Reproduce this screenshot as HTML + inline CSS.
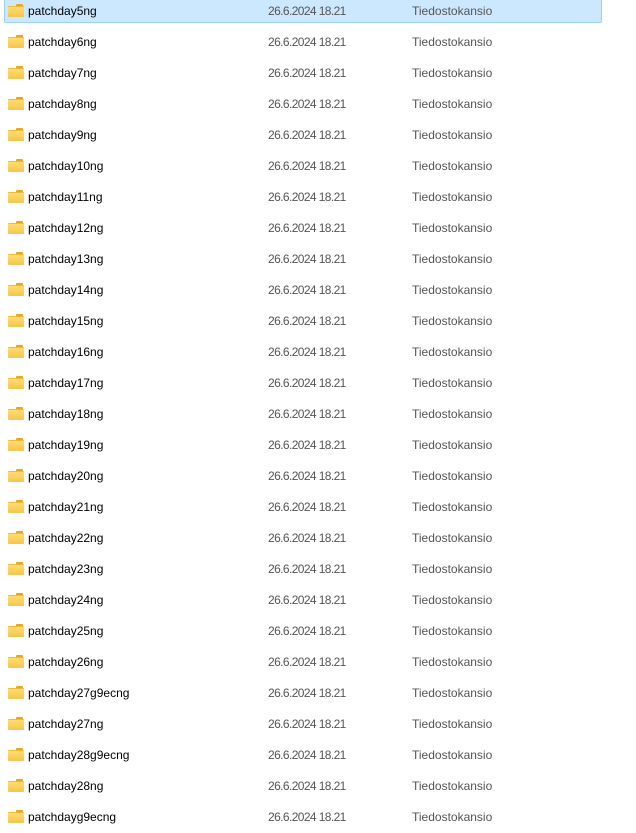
<!DOCTYPE html>
<html><head><meta charset="utf-8"><style>
body{margin:0;width:636px;height:833px;background:#fff;position:relative;overflow:hidden;font-family:"Liberation Sans",sans-serif;font-size:12px}
.r{position:absolute;left:0;width:636px;height:20px;line-height:20px}
.sel{position:absolute;left:4px;top:-5px;width:598px;height:28px;background:#cce8ff;border:1px solid #99d1ff;border-radius:2px;box-sizing:border-box}
.f{position:absolute;left:8px;top:3px;width:16px;height:13px}
.t{position:absolute;left:8px;top:0;width:7px;height:4px;background:#e6a82a;border-radius:1px 1px 0 0}
.b{position:absolute;left:0;top:2px;width:16px;height:11px;background:linear-gradient(#ffdc73,#f7c548);border-top:1px solid #f0b93a;box-sizing:border-box;border-radius:1px}
.n{position:absolute;left:28px;color:#000}
.d{position:absolute;left:268px;color:#555;letter-spacing:-0.6px}
.k{position:absolute;left:412px;color:#555}
</style></head><body>
<div class="sel"></div>
<div id="c"></div>
<script>
var names=["patchday5ng","patchday6ng","patchday7ng","patchday8ng","patchday9ng","patchday10ng","patchday11ng","patchday12ng","patchday13ng","patchday14ng","patchday15ng","patchday16ng","patchday17ng","patchday18ng","patchday19ng","patchday20ng","patchday21ng","patchday22ng","patchday23ng","patchday24ng","patchday25ng","patchday26ng","patchday27g9ecng","patchday27ng","patchday28g9ecng","patchday28ng","patchdayg9ecng"];
var h="";names.forEach(function(n,i){h+='<div class="r" style="top:'+(1+31*i)+'px"><div class="f"><div class="t"></div><div class="b"></div></div><span class="n">'+n+'</span><span class="d">26.6.2024 18.21</span><span class="k">Tiedostokansio</span></div>';});
document.getElementById("c").innerHTML=h;
</script>
</body></html>
